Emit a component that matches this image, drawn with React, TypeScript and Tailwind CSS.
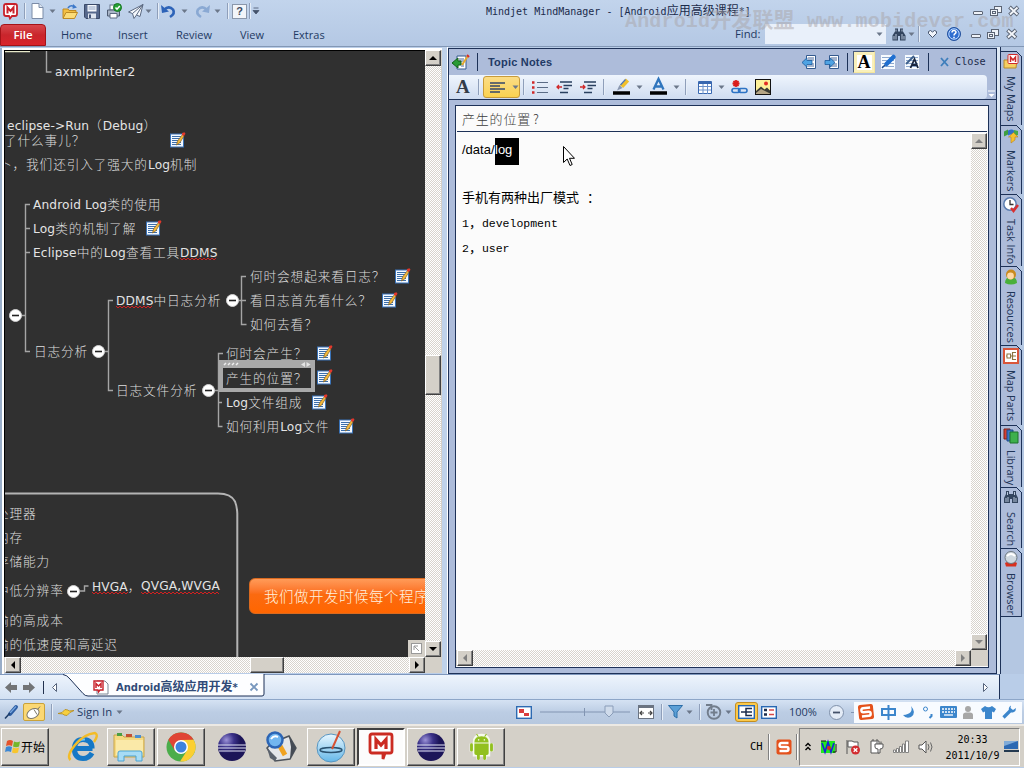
import React from "react";

const CJK = /([\u3000-\u9fff\uff00-\uffef]+)/;

function Mixed({ text, cjk }: { text: string; cjk: string }) {
  return (
    <>
      {text.split(CJK).map((part, i) =>
        CJK.test(part) ? (
          <span key={i} className={cjk}>{part}</span>
        ) : (
          <span key={i}>{part}</span>
        )
      )}
    </>
  );
}

function Ico({ w, h, className = "", children }: { w: number; h: number; className?: string; children: React.ReactNode }) {
  return (
    <svg width={w} height={h} viewBox={`0 0 ${w} ${h}`} fill="none" className={`block shrink-0 overflow-visible ${className}`}>
      {children}
    </svg>
  );
}

function Caret({ className = "" }: { className?: string }) {
  return (
    <Ico w={5} h={4} className={className}>
      <path d="M-.5 .5h6L2.500 4z" fill="#6b7789" />
    </Ico>
  );
}

function Sep({ className = "" }: { className?: string }) {
  return <div className={`h-4 w-px shrink-0 bg-[#8f9fba] shadow-[1px_0_0_#e6eef8] ${className}`} />;
}

function MinIcon({ className = "" }: { className?: string }) {
  return (
    <Ico w={12} h={11} className={className}>
      <rect x="1.500" y="5.500" width="9" height="3" rx=".5" fill="#eef2f8" stroke="#5b6474" />
    </Ico>
  );
}
function RestoreIcon({ className = "" }: { className?: string }) {
  return (
    <Ico w={12} h={11} className={className}>
      <rect x="4.500" y=".5" width="7" height="6" fill="#eef2f8" stroke="#5b6474" />
      <rect x=".5" y="3.500" width="7" height="6" fill="#eef2f8" stroke="#5b6474" />
      <rect x="2.500" y="5.500" width="3" height="2" stroke="#5b6474" />
    </Ico>
  );
}
function CloseIcon({ className = "" }: { className?: string }) {
  return (
    <Ico w={12} h={11} className={className}>
      <path d="M1.500 1l8.500 8M10 1L1.500 9" stroke="#5b6474" strokeWidth="3.800" />
      <path d="M2 1.500l7.500 7M9.500 1.500L2 8.500" stroke="#f3f6fb" strokeWidth="1.900" />
    </Ico>
  );
}
function Binoculars({ className = "" }: { className?: string }) {
  return (
    <Ico w={14} h={13} className={className}>
      <path d="M3 .5h3v3h2v-3h3v3l2.500 4V12.500H8V8H6v4.500H.5V7.500L3 3.500z" fill="#33455f" />
      <path d="M4 1.500v2M10 1.500v2M2 8v3.500M4 6v5.500M10 6v5.500M12 8v3.500" stroke="#b8c7dc" />
    </Ico>
  );
}
function HelpRound() {
  return (
    <Ico w={14} h={14}>
      <circle cx="7" cy="7" r="6.500" fill="#2f6ed0" stroke="#24519c" />
      <circle cx="7" cy="7" r="5.200" stroke="#bcd8ff" />
      <path d="M5 5.500C5 3 9 3 9 5.300 9 6.800 7 6.600 7 8.500M7 9.800v1.400" stroke="#fff" strokeWidth="1.500" />
    </Ico>
  );
}

function TitleBar() {
  return (
    <div className="flex h-[22px] shrink-0 items-center">
      <Ico w={15} h={16} className="ml-[3px]">
        <path d="M3 1h9q2 0 2 2v8q0 2-2 2H9l-2 2.500L6 13H3q-2 0-2-2V3q0-2 2-2z" fill="#fff" stroke="#c8202a" strokeWidth="1.800" />
        <path d="M4.500 10.500v-6l3 3.500 3-3.500v6" stroke="#c8202a" strokeWidth="2" />
      </Ico>
      <Sep className="ml-[6px]" />
      <Ico w={13} h={16} className="ml-[6px]">
        <path d="M1 .5h7l4 4v11H1z" fill="#fff" stroke="#7b8ba6" />
        <path d="M8 .5v4h4" fill="#dce5f2" stroke="#7b8ba6" />
      </Ico>
      <Caret className="ml-[6px]" />
      <Ico w={16} h={15} className="ml-[7px]">
        <path d="M1 14V5h5l1 1.500h7V9" fill="#f3bf42" stroke="#bd8a25" />
        <path d="M1 14.500L4 8.500h11.500L12.500 14.500z" fill="#fbdc78" stroke="#bd8a25" />
        <path d="M6 4q2-3.500 6-1.500" stroke="#3d78c9" strokeWidth="1.600" />
        <path d="M11 0l4 3.500-4.500 1.300z" fill="#3d78c9" />
      </Ico>
      <Ico w={16} h={15} className="ml-[6px]">
        <path d="M.5.5h15v14H2l-1.500-1.500z" fill="#56688c" stroke="#3b4a69" />
        <rect x="3.500" y="1" width="9" height="6.500" fill="#f5f8fc" />
        <path d="M4.500 3h7M4.500 5h7" stroke="#8fa2c4" />
        <rect x="4" y="9.500" width="8" height="5" fill="#dfe6f0" />
        <rect x="5" y="10.500" width="2" height="3.500" fill="#44557a" />
      </Ico>
      <Ico w={15} h={16} className="ml-[7px]">
        <rect x="3" y="2" width="6" height="5" fill="#fff" stroke="#66748a" />
        <path d="M.5 7h12v6H.5z" fill="#a9b5c7" stroke="#4d5a70" />
        <path d="M3 10.500h7v4.500H3z" fill="#fff" stroke="#5d6a80" />
        <circle cx="10.500" cy="4.500" r="4" fill="#25a233" stroke="#157320" />
        <path d="M8.500 4.500l1.500 1.700L12.800 3" stroke="#fff" strokeWidth="1.500" />
      </Ico>
      <Ico w={16} h={15} className="ml-[6px]">
        <path d="M15 .5L.5 8l4 1.500L6 14.500l2.500-3.500 3.500 1.500z" fill="#f6f9fd" stroke="#5c6a82" />
        <path d="M15 .5L4.500 9.500M15 .5L8.500 11" stroke="#5c6a82" />
      </Ico>
      <Caret className="ml-[2px]" />
      <Sep className="ml-[6px]" />
      <Ico w={15} h={13} className="ml-[3px]">
        <path d="M3 5q5-5 9-.5 2.500 4-3 7.500" stroke="#2d63b8" strokeWidth="2.600" />
        <path d="M0 0l1 8L8 6.500z" fill="#2d63b8" />
      </Ico>
      <Caret className="ml-[6px]" />
      <Ico w={15} h={13} className="ml-[8px]">
        <path d="M12 5Q7 0 3 4.500.5 8.500 6 12" stroke="#8aa9d3" strokeWidth="2.600" />
        <path d="M15 0l-1 8L7 6.500z" fill="#8aa9d3" />
      </Ico>
      <Caret className="ml-[5px]" />
      <Sep className="ml-[7px]" />
      <div className="ml-1 flex h-[15px] w-[15px] shrink-0 items-center justify-center border border-[#8a97ab] bg-[#f2f5fa] font-['Liberation_Sans'] text-[11px] font-bold text-[#3d4a60]">?</div>
      <Sep className="ml-[2px]" />
      <Ico w={6} h={8} className="ml-[3px]">
        <path d="M.5 1h5M0 3.500h6L3 7z" fill="#44526a" stroke="#44526a" strokeWidth=".8" />
      </Ico>
      <div className="ml-[227px] w-[267px] shrink-0 whitespace-pre font-['DejaVu_Sans_Mono','Noto_Sans_CJK_SC',monospace] text-[10px] text-[#1b2b4a]">
        <Mixed text="Mindjet MindManager - [Android应用高级课程*]" cjk="text-[12px]" />
      </div>
      <MinIcon className="ml-[219px]" />
      <RestoreIcon className="ml-[6px]" />
      <CloseIcon className="ml-[6px]" />
    </div>
  );
}

function Ribbon() {
  return (
    <div className="relative flex h-[24px] shrink-0 items-center font-['Open_Sans',sans-serif] text-[11px] text-[#1f3a63]">
      <div className="mt-[2px] flex h-[22px] w-[46px] shrink-0 items-center justify-center rounded-t-[4px] border border-[#a31318] bg-linear-to-b from-[#d8464d] via-[#c9252c] to-[#d8242b] text-[11.500px] font-semibold text-white">File</div>
      <div className="ml-[15px] w-[57px] shrink-0 pt-[3px]">Home</div>
      <div className="w-[58px] shrink-0 pt-[3px]">Insert</div>
      <div className="w-[64px] shrink-0 pt-[3px]">Review</div>
      <div className="w-[53px] shrink-0 pt-[3px]">View</div>
      <div className="w-[40px] shrink-0 pt-[3px]">Extras</div>
      <div className="ml-[402px] w-[30px] shrink-0 text-[11.300px]">Find:</div>
      <div className="flex h-[20px] w-[121px] shrink-0 items-center justify-end bg-[#e9f0fa] pr-[4px]">
        <Caret />
      </div>
      <Binoculars className="ml-[6px]" />
      <Caret className="ml-[3px]" />
      <Sep className="ml-[4px]" />
      <Ico w={9} h={8} className="ml-[9px]">
        <path d="M.5 1.500l2-1L4.500 2 6.500.5l2 1v2l-4 4-4-4z" fill="#f2f6fc" stroke="#44526a" />
      </Ico>
      <div className="ml-[10px]"><HelpRound /></div>
      <MinIcon className="ml-[9px]" />
      <RestoreIcon className="ml-[5px]" />
      <CloseIcon className="ml-[7px]" />
      <div className="absolute left-[625px] top-[-14px] whitespace-pre font-['Liberation_Mono','Noto_Sans_CJK_SC',monospace] text-[20px] leading-[28px] font-bold tracking-[0.16px] text-[#a9a5a8]/50">
        <Mixed text="Android开发联盟 www.mobidever.com" cjk="text-[21px]" />
      </div>
    </div>
  );
}

function NoteIcon() {
  return (
    <Ico w={15} h={16}>
      <rect x=".5" y="2" width="13" height="13" fill="#f4f9ff" stroke="#3a73b8" />
      <path d="M2 4.500h9M2 6.500h9M2 8.500h9M2 10.500h9M2 12.500h9" stroke="#3c6eaa" />
      <path d="M12.500 2.500L7.500 9l-1 4 3.200-2L14 4z" fill="#f3b73a" stroke="#80612a" strokeWidth=".7" />
      <path d="M12 1l2.500-.8 1 1.500L14 4l-2-1z" fill="#e2382c" />
    </Ico>
  );
}

function Collapse() {
  return (
    <Ico w={13} h={13}>
      <circle cx="6.500" cy="6.500" r="6" fill="#fff" stroke="#d0d0d0" />
      <path d="M3 6.500h7" stroke="#222" strokeWidth="1.600" />
    </Ico>
  );
}

type Topic = { x: number; y: number; text: string };
const topics: Topic[] = [
  { x: 55, y: 72, text: "axmlprinter2" },
  { x: 7, y: 125, text: "eclipse->Run（Debug）" },
  { x: 4, y: 140, text: "了什么事儿？" },
  { x: -1, y: 164, text: "卜，我们还引入了强大的Log机制" },
  { x: 33, y: 204, text: "Android Log类的使用" },
  { x: 33, y: 228, text: "Log类的机制了解" },
  { x: 33, y: 252, text: "Eclipse中的Log查看工具DDMS" },
  { x: 250, y: 276, text: "何时会想起来看日志？" },
  { x: 250, y: 300, text: "看日志首先看什么？" },
  { x: 250, y: 324, text: "如何去看？" },
  { x: 116, y: 300, text: "DDMS中日志分析" },
  { x: 34, y: 351, text: "日志分析" },
  { x: 226, y: 353, text: "何时会产生？" },
  { x: 116, y: 390, text: "日志文件分析" },
  { x: 226, y: 402, text: "Log文件组成" },
  { x: 226, y: 426, text: "如何利用Log文件" },
  { x: -4, y: 513, text: "处理器" },
  { x: -4, y: 537, text: "内存" },
  { x: -4, y: 561, text: "存储能力" },
  { x: -4, y: 590, text: "中低分辨率" },
  { x: 92, y: 586, text: "HVGA，" },
  { x: 141, y: 586, text: "QVGA,WVGA" },
  { x: -4, y: 620, text: "输的高成本" },
  { x: -4, y: 644, text: "输的低速度和高延迟" },
];
const notes = [[170, 132], [146, 220], [395, 268], [382, 292], [317, 345], [317, 369], [312, 394], [339, 418]];
const collapses = [[9, 309], [92, 345], [226, 294], [202, 384], [67, 585]];
const squiggles = [[180, 258, 217], [116, 306, 153], [92, 592, 128], [141, 592, 220]];

function wave(x1: number, y: number, x2: number) {
  let d = `M${x1} ${y}`;
  for (let x = x1 + 2, k = 0; x <= x2; x += 2, k++) d += `L${x} ${k % 2 ? y : y + 2}`;
  return d;
}

function MapCanvas() {
  return (
    <div className="relative h-[607px] w-[421px] shrink-0 overflow-hidden border-l border-t border-black bg-[#303030]">
      <svg className="absolute -left-px -top-px" width="421" height="607" viewBox="4 50 421 607" fill="none">
        <path d="M5 51.500h25" stroke="#e6e8c8" strokeWidth="1.500" />
        <path d="M46.500 51v21h5M30 204.500h-4.500v147H30M25 228.500h5M25 252.500h5M20 315.500h5M113 300.500h-4.500v90H113M104 351.500h4M246 276.500h-4.500v48h5M238 300.500h8M223 353.500h-4.500v73h4M214 390.500h4M218 402.500h4M80 591h4.500v-5h4" stroke="#a5a5a5" strokeWidth="1.400" />
        <path d="M4 493.500h214q13 0 17 8 2 5 2.300 12V660" stroke="#b4b4b4" strokeWidth="2" />
        {squiggles.map(([a, b, c]) => (
          <path key={`${a}-${b}`} d={wave(a, b, c)} stroke="#d32020" strokeWidth="1" />
        ))}
      </svg>
      <div className="absolute left-[244px] top-[527px] flex h-[36px] w-[200px] items-center rounded-[6px] border border-[#d96a20] bg-linear-to-b from-[#ff9b58] via-[#fb6a10] via-45% to-[#ff6600] pl-[14px] font-['Noto_Sans_CJK_SC',sans-serif] text-[14.500px] font-light tracking-[0.5px] whitespace-nowrap text-[#fff1df]">
        我们做开发时候每个程序
      </div>
      {topics.map((t) => (
        <div
          key={`${t.x}-${t.y}`}
          className="absolute whitespace-pre font-['DejaVu_Sans','Noto_Sans_CJK_SC',sans-serif] text-[12.200px] leading-[20px] tracking-[0.13px] text-[#e4e4e4]"
          style={{ left: t.x - 5, top: t.y - 61 }}
        >
          <Mixed text={t.text} cjk="font-['Noto_Sans_CJK_SC'] text-[12.700px] font-light tracking-[0.85px] text-[#dedede]" />
        </div>
      ))}
      <div className="absolute left-[214px] top-[309px] flex h-[32px] w-[96px] flex-col border-x-[4px] border-b-[4px] border-[#a9a9a9]">
        <div className="flex h-[8px] shrink-0 items-center justify-between bg-[#a9a9a9] px-px">
          <Ico w={16} h={4}><path d="M0 3l2-2M4 3l2-2M8 3l2-2M12 3l2-2" stroke="#eee" strokeWidth="1.500" /></Ico>
          <Ico w={9} h={5}><path d="M4 0v5L0 2.500zM5.500 0v5l4-2.500z" fill="#e4e4e4" /></Ico>
        </div>
        <div className="flex grow items-center bg-[#303030] pl-[3px] font-['Noto_Sans_CJK_SC'] text-[12.700px] leading-[16px] font-light tracking-[0.85px] whitespace-nowrap text-[#dedede]">产生的位置？</div>
      </div>
      {notes.map(([x, y]) => (
        <div key={`${x}-${y}`} className="absolute" style={{ left: x - 5, top: y - 51 }}><NoteIcon /></div>
      ))}
      {collapses.map(([x, y]) => (
        <div key={`${x}-${y}`} className="absolute" style={{ left: x - 5, top: y - 51 }}><Collapse /></div>
      ))}
      <div className="absolute bottom-0 right-0 flex h-[17px] w-[17px] items-center justify-center bg-[#d4d0c8]">
        <Ico w={11} h={11}>
          <rect x=".5" y=".5" width="10" height="10" fill="#fff" stroke="#999" />
          <path d="M3 7V3h4M3 3l5 5" stroke="#999" />
        </Ico>
      </div>
    </div>
  );
}

function ScrollBtn({ dir, dim }: { dir: "u" | "d" | "l" | "r"; dim?: boolean }) {
  const d = { u: "M4 0l4 4H0z", d: "M0 0h8L4 4z", l: "M4 0v8L0 4z", r: "M0 0l4 4-4 4z" }[dir];
  const v = dir === "u" || dir === "d";
  return (
    <div className="flex h-4 w-4 shrink-0 items-center justify-center border border-t-white border-l-white border-r-[#404040] border-b-[#404040] bg-[#d4d0c8] shadow-[inset_-1px_-1px_0_#808080]">
      <Ico w={v ? 8 : 4} h={v ? 4 : 8}><path d={d} fill={dim ? "#808080" : "#000"} /></Ico>
    </div>
  );
}

const TRACK = "bg-[#f0eeea] bg-[repeating-conic-gradient(#fff_0_25%,#d8d4cd_0_50%)] bg-[length:2px_2px]";
const THUMB = "shrink-0 border border-t-white border-l-white border-r-[#404040] border-b-[#404040] bg-[#d4d0c8] shadow-[inset_-1px_-1px_0_#808080]";

function MapPane() {
  return (
    <div className="flex w-[438px] shrink-0 flex-col border-t-2 border-white bg-[#d4d0c8]">
      <div className="flex h-[607px] shrink-0">
        <MapCanvas />
        <div className={`flex w-4 shrink-0 flex-col ${TRACK}`}>
          <ScrollBtn dir="u" />
          <div className={`mt-[289px] h-[40px] ${THUMB}`} />
          <div className="grow" />
          <ScrollBtn dir="d" />
        </div>
      </div>
      <div className="flex h-4 shrink-0">
        <div className={`ml-px flex w-[420px] ${TRACK}`}>
          <ScrollBtn dir="l" />
          <div className={`ml-[229px] w-[34px] ${THUMB}`} />
          <div className="grow" />
          <ScrollBtn dir="r" />
        </div>
      </div>
    </div>
  );
}

function LinesIcon({ kind, className = "" }: { kind: "bul" | "out" | "in"; className?: string }) {
  return (
    <Ico w={17} h={13} className={className}>
      {kind === "bul" ? (
        <>
          <path d="M5 1.500h11M5 6.500h11M5 11.500h11" stroke="#5b6c86" />
          <path d="M0 1.500h2.500M0 6.500h2.500M0 11.500h2.500" stroke="#d02828" strokeWidth="2.500" />
        </>
      ) : (
        <>
          <path d="M4 1h12M7.500 4.500h8.500M7.500 7.500h5M4 11.500h8" stroke="#2a405f" strokeWidth="1.600" />
          <path d={kind === "out" ? "M6 6H1M3 4L1 6l2 2" : "M0 6h5M3 4l2 2-2 2"} stroke="#d02828" strokeWidth="1.300" />
        </>
      )}
    </Ico>
  );
}

function SheetArrow({ flip, className = "" }: { flip?: boolean; className?: string }) {
  return (
    <Ico w={15} h={15} className={className}>
      <path d="M4.500.5h9v13h-9z" fill="#fff" stroke="#345a8e" />
      <path d="M6 3h6M6 5h6M8 9h4M6 11h6" stroke="#49699b" />
      <path d={flip ? "M10 7.500L5 2.800V5.500H0v4h5v2.700z" : "M0 7.500l5-4.700V5.500h5v4H5v2.700z"} fill="#4fa3e3" stroke="#1c5b9d" strokeWidth=".8" />
    </Ico>
  );
}

function SheetPen({ letter, className = "" }: { letter?: boolean; className?: string }) {
  return (
    <Ico w={14} h={14} className={className}>
      <path d="M0 0h14v14H0z" fill="#f7fbff" />
      <path d="M1 2.500h12M1 5.500h12M1 8.500h12M1 11.500h12" stroke="#8ea9cf" />
      {letter ? (
        <>
          <path d="M9 1L1 9" stroke="#3d5f8c" strokeWidth="2" />
          <path d="M5.500 13L9.500 4l3.500 9M7 10h5" stroke="#1a2740" strokeWidth="1.800" />
        </>
      ) : (
        <>
          <path d="M12.500 2L5.500 9" stroke="#1f6fd0" strokeWidth="4.500" strokeLinecap="round" />
          <path d="M4 10l-3 3" stroke="#1f4f90" strokeWidth="1.500" />
        </>
      )}
    </Ico>
  );
}

function NotesPane() {
  return (
    <div className="mt-px flex w-[549px] shrink-0 flex-col border border-[#1d3157] bg-[#adbcda]">
      <div className="flex h-[26px] shrink-0 items-center">
        <Ico w={17} h={15} className="ml-[3px]">
          <path d="M5 1h9v13H5z" fill="#fff" stroke="#345a8e" />
          <path d="M7 4h5M7 6h5M9 9h3M9 11h3" stroke="#49699b" />
          <path d="M0 8l6-5v3h3v4H6v3z" fill="#2a9b35" stroke="#126019" />
          <path d="M15.500 1.500L10 10" stroke="#e3a92f" strokeWidth="2" />
          <path d="M15 0l2 2" stroke="#d92a22" strokeWidth="2" />
        </Ico>
        <div className="ml-[8px] h-[18px] w-px shrink-0 bg-[#1d3157]" />
        <div className="ml-[10px] w-[314px] shrink-0 font-['Liberation_Sans',sans-serif] text-[11px] font-bold tracking-[0.2px] text-[#223a66]">Topic Notes</div>
        <SheetArrow />
        <SheetArrow flip className="ml-[8px]" />
        <div className="ml-[7px] h-[18px] w-px shrink-0 bg-[#1d3157]" />
        <div className="ml-[5px] flex h-[22px] w-[22px] shrink-0 items-center justify-center border border-[#4b5c7c] border-r-[#f5e69c] border-b-[#f5e69c] bg-[#f9f0ba]">
          <div className="h-[15px] w-[15px] bg-white text-center font-['Liberation_Serif',serif] text-[18px] leading-[15px] font-bold text-black">A</div>
        </div>
        <SheetPen className="ml-[6px]" />
        <SheetPen letter className="ml-[10px]" />
        <div className="ml-[9px] h-[18px] w-px shrink-0 bg-[#1d3157]" />
        <Ico w={9} h={8} className="ml-[11px]"><path d="M1 0l7 8M8 0L1 8" stroke="#3e7ebb" strokeWidth="1.800" /></Ico>
        <div className="ml-[6px] shrink-0 font-['DejaVu_Sans_Mono',monospace] text-[10.200px] text-[#1b2b4a]">Close</div>
      </div>
      <div className="flex h-[25px] shrink-0 border-b border-[#1d3157]">
        <div className="flex w-[538px] shrink-0 items-center rounded-r-[4px] bg-linear-to-b from-[#eff5fd] to-[#cfdcf0]">
          <div className="ml-[7px] w-[15px] shrink-0 font-['Liberation_Serif',serif] text-[19px] leading-[20px] font-bold text-[#333c48]">A</div>
          <Sep className="ml-[7px]" />
          <div className="ml-[4px] flex h-[22px] w-[37px] shrink-0 items-center rounded-[3px] border border-[#c89b3a] bg-linear-to-b from-[#fbdc85] to-[#fbd24e] pl-[6px]">
            <Ico w={15} h={11}><path d="M0 1h15M0 4h10M0 7h15M0 10h10" stroke="#34476a" strokeWidth="1.500" /></Ico>
            <Caret className="ml-[8px]" />
          </div>
          <Sep className="ml-[3px]" />
          <LinesIcon kind="bul" className="ml-[8px]" />
          <LinesIcon kind="out" className="ml-[7px]" />
          <LinesIcon kind="in" className="ml-[7px]" />
          <Sep className="ml-[6px]" />
          <Ico w={18} h={16} className="ml-[9px]">
            <path d="M0 14h17" stroke="#000" strokeWidth="3.500" />
            <path d="M14.500 1L8.500 7.500" stroke="#f1c02b" strokeWidth="4.500" />
            <path d="M12.500 .5L7.500 6" stroke="#4a76c0" strokeWidth="1.200" />
            <path d="M6.500 6l-2.500 5.500 5.500-2.500z" fill="#8a98b0" />
          </Ico>
          <Caret className="ml-[6px]" />
          <Ico w={18} h={16} className="ml-[8px]">
            <path d="M0 14h17" stroke="#000" strokeWidth="3.500" />
            <path d="M3.500 10.500L8.500 0 13.500 10.500M5 7.500h7" stroke="#2f75bd" strokeWidth="2.300" />
          </Ico>
          <Caret className="ml-[6px]" />
          <Sep className="ml-[6px]" />
          <Ico w={14} h={13} className="ml-[12px]">
            <path d="M.5.5h13v12H.5z" fill="#fff" stroke="#3968b0" />
            <path d="M0 2h14" stroke="#3968b0" strokeWidth="2" />
            <path d="M1 5.500h12M1 9h12M5 3v10M9.500 3v10" stroke="#6d92cb" />
          </Ico>
          <Caret className="ml-[7px]" />
          <Ico w={17} h={14} className="ml-[7px]">
            <path d="M5 0v7M1.500 3.500h7M2.500 1l5 5M7.500 1l-5 5" stroke="#d91d1d" strokeWidth="1.800" />
            <rect x="1" y="8.500" width="8" height="4" rx="2" stroke="#2d73c4" strokeWidth="1.600" />
            <rect x="7.500" y="8.500" width="8.500" height="4" rx="2" stroke="#2d73c4" strokeWidth="1.600" />
          </Ico>
          <Ico w={16} h={16} className="ml-[7px]">
            <rect x=".5" y=".5" width="15" height="15" fill="#fdf19a" stroke="#111" />
            <circle cx="11" cy="4.500" r="2" fill="#e22c24" />
            <path d="M1 12l5-4.500 3.500 3 2.500-2 3 3V15H1z" fill="#3b3c35" />
            <path d="M1 14l5-4 9 4.500V15H1z" fill="#b5a585" />
          </Ico>
        </div>
        <Ico w={7} h={8} className="ml-px mt-[15px]"><path d="M0 1h7" stroke="#fff" /><path d="M.5 4h6l-3 3z" fill="#fff" /></Ico>
      </div>
      <div className="mt-[5px] ml-[6px] flex h-[563px] w-[534px] shrink-0 flex-col border border-[#1d3157] bg-[#fbfbfb]">
        <div className="mx-px flex h-[26px] shrink-0 items-center border-b border-[#1d3157] pl-[5px] font-['Noto_Sans_CJK_SC'] text-[13px] font-light tracking-[0.8px] text-[#3c3c3c]">产生的位置<span className="ml-[2px]">?</span></div>
        <div className="mt-px flex h-[517px] shrink-0">
          <div className="flex w-[515px] shrink-0 flex-col pl-[6px] text-black">
            <div className="mt-[5px] flex h-[27px] shrink-0 items-start font-['Liberation_Sans',sans-serif] text-[13px] leading-[24px]">
              <span className="w-[33px] shrink-0">/data/</span>
              <span className="h-[27px] w-[24px] bg-black text-white">log</span>
            </div>
            <div className="mt-[20px] flex h-[24px] shrink-0 items-center whitespace-pre font-['Noto_Sans_CJK_SC'] text-[13px]">手机有两种出厂模式<span className="ml-[8px]">：</span></div>
            <div className="mt-[3px] flex h-[24px] shrink-0 items-center font-['Liberation_Mono','Noto_Sans_CJK_SC',monospace] text-[11.500px]">1<span className="w-[13px] text-[13px]">，</span>development</div>
            <div className="mt-[1px] flex h-[24px] shrink-0 items-center font-['Liberation_Mono','Noto_Sans_CJK_SC',monospace] text-[11.500px]">2<span className="w-[13px] text-[13px]">，</span>user</div>
          </div>
          <div className={`flex w-4 shrink-0 flex-col justify-between ${TRACK}`}>
            <ScrollBtn dir="u" dim />
            <ScrollBtn dir="d" dim />
          </div>
        </div>
        <div className="flex h-4 shrink-0 bg-[#d4d0c8]">
          <div className={`ml-px flex w-[514px] justify-between ${TRACK}`}>
            <ScrollBtn dir="l" dim />
            <ScrollBtn dir="r" dim />
          </div>
        </div>
      </div>
    </div>
  );
}

const sideIcons: Record<string, React.ReactNode> = {
  "My Maps": (
    <><path d="M1 14V6h4l1-2h8l-1 10z" fill="#f5cf62" stroke="#b98b2a" /><rect x="5" y=".5" width="10" height="9" rx="1" fill="#fff" stroke="#cf2a2a" /><path d="M7.500 8V3l2.500 3 2.500-3v5" stroke="#cf2a2a" strokeWidth="1.500" /></>
  ),
  Markers: (
    <><path d="M1 3.500l4-2v5l-4 2z" fill="#3e9e3e" /><path d="M5 2.500q4-2 6 0v5q-3-2-6 0z" fill="#2f70c8" /><path d="M11 2l4 1v4l-4 1z" fill="#48a848" /><path d="M8 15V9H5.500l5-4.500 4.500 4.500h-3v3z" fill="#f5c02f" stroke="#b9811a" strokeWidth=".6" /></>
  ),
  "Task Info": (
    <><circle cx="7" cy="7" r="6.200" fill="#fff" stroke="#5b7db0" strokeWidth="1.500" /><path d="M7 3v4.500h3.500" stroke="#333" strokeWidth="1.300" /><path d="M8 11l2.500 3L15 8" stroke="#d93030" strokeWidth="2.400" /></>
  ),
  Resources: (
    <><path d="M2 14q0-6 6-6t6 6q-6 3-12 0z" fill="#49b03a" /><circle cx="8" cy="5.500" r="5" fill="#c98a1e" /><circle cx="7.500" cy="7" r="3.400" fill="#ffd9a5" /></>
  ),
  "Map Parts": (
    <><rect x="1" y="1" width="14" height="14" fill="#fff" stroke="#d9553a" strokeWidth="2" /><path d="M3 8h9M9.500 4.500v7M9 4.500h4M9 8h4M9 11.500h4" stroke="#8b7440" strokeWidth="1.200" /><rect x="4" y="6" width="3.500" height="4" fill="#fff" stroke="#8b7440" /></>
  ),
  Library: (
    <><path d="M1 1h6v10H1z" fill="#d64030" stroke="#7c2018" /><path d="M4 2h6v11H4z" fill="#3a76c8" stroke="#1f4a88" /><path d="M7 4h8v11H7z" fill="#3db04c" stroke="#1d702a" /></>
  ),
  Search: (
    <><path d="M3 1h3v3h4V1h3v3l2 4v5H9V9H7v4H1V8l2-4z" fill="#33455f" /><path d="M4.500 2v3M11.500 2v3M3 8v4M5 7v5M11 7v5M13 8v4" stroke="#b8c7dc" /></>
  ),
  Browser: (
    <><path d="M2 12q6-4 12 0l-1 3.500H3z" fill="#d8301f" /><circle cx="8" cy="6.500" r="6" fill="#cfd8df" stroke="#6d7780" /><path d="M4 5q4-4 8 0" stroke="#fff" strokeWidth="2" /></>
  ),
};

const sideTabs = [
  { label: "My Maps", box: "h-[74px]" },
  { label: "Markers", box: "h-[69px]" },
  { label: "Task Info", box: "h-[72px]" },
  { label: "Resources", box: "h-[79px]" },
  { label: "Map Parts", box: "h-[80px]" },
  { label: "Library", box: "h-[62px]" },
  { label: "Search", box: "h-[61px]" },
  { label: "Browser", box: "h-[68px]" },
];

function SideTabs() {
  return (
    <div className="flex w-[24px] shrink-0 flex-col border-l border-[#1d3157] bg-[#b4c7e2] pt-[4px]">
      {sideTabs.map((t) => (
        <div key={t.label} className={`relative flex w-[21px] shrink-0 flex-col items-center border-t border-r border-[#1d3157] bg-[#adbcda] pt-[2px] ${t.box}`}>
          <Ico w={16} h={16}>{sideIcons[t.label]}</Ico>
          <div className="mt-[6px] whitespace-nowrap font-['Open_Sans',sans-serif] text-[10.800px] leading-[16px] text-[#1f3558] [writing-mode:vertical-rl]">{t.label}</div>
          <svg className="absolute -top-px -right-px" width="6" height="6" viewBox="0 0 6 6">
            <path d="M0 0h6v6z" fill="#b4c7e2" /><path d="M0 0l6 6" stroke="#1d3157" />
          </svg>
        </div>
      ))}
      <div className="w-[21px] border-t border-[#1d3157]" />
    </div>
  );
}

function DocTabs() {
  return (
    <div className="flex h-[25px] w-[1000px] shrink-0 items-center border-t border-[#7f98bd] border-r border-r-[#1d3157] bg-linear-to-b from-[#edf4fc] to-[#d3e1f3]">
      <Ico w={13} h={11} className="mt-px ml-[5px]"><path d="M0 5.500L6 0v3h6v5H6v3z" fill="#727476" /></Ico>
      <Ico w={13} h={11} className="mt-px ml-[5px]"><path d="M12 5.500L6 0v3H0v5h6v3z" fill="#727476" /></Ico>
      <div className="mt-px ml-[7px] h-[13px] w-px shrink-0 bg-[#22314e]" />
      <Ico w={5} h={9} className="mt-px ml-[8px]"><path d="M4.500.5v8l-4-4z" fill="#fff" stroke="#56647c" /></Ico>
      <div className="relative ml-[6px] flex h-full w-[204px] shrink-0 items-center">
        <svg className="absolute left-0 -top-px" width="204" height="24" viewBox="0 0 204 24" fill="none">
          <path d="M0 0q4 1 7 5l13 14.500q2 2.500 5 2.500h174q2 0 2-2V0z" fill="#fdfeff" />
          <path d="M0 .5q4 .5 7 4.500l13 14.500q2 2.500 5 2.500h174q2 0 2-2V0" stroke="#1d3157" />
        </svg>
        <Ico w={16} h={15} className="relative ml-[30px]">
          <path d="M4 1h8l3 3v10H4z" fill="#fff" stroke="#7d8795" />
          <path d="M1 1h9v9H7l-1.500 2L5 10H1z" fill="#fff" stroke="#c8202a" strokeWidth="1.400" />
          <path d="M3 8V3.500L5.500 6 8 3.500V8" stroke="#c8202a" strokeWidth="1.500" />
        </Ico>
        <div className="relative ml-[7px] w-[134px] shrink-0 whitespace-nowrap font-['DejaVu_Sans','Noto_Sans_CJK_SC',sans-serif] text-[10px] font-bold text-[#304b78]"><Mixed text="Android高级应用开发*" cjk="text-[12px]" /></div>
        <Ico w={8} h={8} className="relative"><path d="M.5.5l7 7M7.500.5l-7 7" stroke="#7797bd" strokeWidth="1.800" /></Ico>
      </div>
      <div className="grow" />
      <Ico w={5} h={9} className="mt-px mr-[11px]"><path d="M.5.5v8l4-4z" fill="#fff" stroke="#56647c" /></Ico>
    </div>
  );
}

function SogouS({ className = "" }: { className?: string }) {
  return (
    <Ico w={16} h={16} className={className}>
      <rect x=".5" y=".5" width="15" height="15" rx="2" fill="#e4511b" />
      <path d="M12.500 4H5.500q-2 0-2 2t2 2h5q2 0 2 2t-2 2h-7" stroke="#fff" strokeWidth="2.400" />
    </Ico>
  );
}

function StatusBar() {
  return (
    <div className="flex h-[25px] shrink-0 items-center border-t border-[#8da6c8] bg-linear-to-b from-[#d5e2f3] via-[#bccde4] to-[#b7c8df] font-['Open_Sans',sans-serif] text-[11.300px] text-[#1f3a63]">
      <Ico w={14} h={14} className="ml-[4px]">
        <path d="M12 2L6 9" stroke="#2c5da3" strokeWidth="4" strokeLinecap="round" /><path d="M12 1.500L6 8" stroke="#77a6df" strokeWidth="1.200" /><path d="M6 8l-5 5.500" stroke="#1e3d68" strokeWidth="1.600" />
      </Ico>
      <div className="ml-[5px] flex h-[18px] w-[22px] shrink-0 items-center justify-center rounded-[2px] border border-[#c9a23b] bg-[#fbd874]">
        <Ico w={16} h={13}><ellipse cx="7" cy="7.500" rx="6.500" ry="4.500" transform="rotate(-30 7 7.500)" fill="#fff" stroke="#7d7868" /><path d="M8 3.500l3 5M12 3l2-2.500" stroke="#7d7868" /></Ico>
      </div>
      <Sep className="ml-[6px]" />
      <Ico w={16} h={8} className="ml-[6px]"><path d="M0 5.500l4-1 3-3 3 .5 1 1 5-.5-4 2-3 3-3-.5-1-1z" fill="#f7cf3e" stroke="#b48a1c" strokeWidth=".8" /></Ico>
      <div className="ml-[3px] w-[40px] shrink-0 whitespace-nowrap">Sign In</div>
      <Caret />
      <Ico w={16} h={13} className="ml-[394px]">
        <rect x=".7" y=".7" width="14.600" height="11.600" fill="#fff" stroke="#2d6ab2" strokeWidth="1.400" />
        <path d="M3 3h5v4H3zM8 7h5v3H8z" fill="#d93d3d" />
      </Ico>
      <Ico w={90} h={16} className="ml-[8px]">
        <path d="M0 8h90M44.500 4v8" stroke="#8295b2" />
        <path d="M65 2h8v7l-4 4-4-4z" fill="#cfdbeb" stroke="#8a9db9" />
      </Ico>
      <Ico w={16} h={14} className="ml-[8px]">
        <rect x=".5" y=".5" width="15" height="13" fill="#fff" stroke="#6b7482" /><path d="M0 2h16" stroke="#6b7482" strokeWidth="2" /><path d="M2 8h4M10 8h4M4 6L2 8l2 2M12 6l2 2-2 2" stroke="#444" strokeWidth="1.200" />
      </Ico>
      <Sep className="ml-[7px]" />
      <Ico w={15} h={14} className="ml-[6px]"><path d="M.5.5h14L9 7v6l-3-2V7z" fill="#5b9fd6" stroke="#2d6ea8" /></Ico>
      <Caret className="ml-[4px]" />
      <Sep className="ml-[7px]" />
      <Ico w={16} h={16} className="ml-[6px]">
        <circle cx="8" cy="8.500" r="6.300" stroke="#727d8c" strokeWidth="1.900" /><path d="M0 1h5.500v5" stroke="#727d8c" strokeWidth="1.800" /><path d="M8 5v7M4.500 8.500h7" stroke="#727d8c" strokeWidth="1.800" />
      </Ico>
      <Caret className="ml-[4px]" />
      <div className="ml-[4px] flex h-[20px] w-[23px] shrink-0 items-center justify-center rounded-[3px] border border-[#c28d20] bg-[#fbc94b]">
        <Ico w={17} h={14}><rect x=".7" y=".7" width="15.600" height="12.600" fill="#fff" stroke="#2767b3" strokeWidth="1.400" /><path d="M3 7h5M14 3.500H8v7h6M8 7h6" stroke="#1b2c4c" strokeWidth="1.500" /></Ico>
      </div>
      <Ico w={16} h={13} className="ml-[3px]"><rect x=".7" y=".7" width="14.600" height="11.600" fill="#fff" stroke="#2767b3" strokeWidth="1.400" /><path d="M3 4h3M3 8.500h3" stroke="#1b2c4c" strokeWidth="2.500" /><path d="M8 4h5M8 8.500h5" stroke="#d54848" strokeWidth="1.300" /></Ico>
      <div className="ml-[12px] w-[40px] shrink-0 text-[11px]">100%</div>
      <Ico w={15} h={15}><circle cx="7.500" cy="7.500" r="7" fill="#e4ecf7" stroke="#7f90aa" /><path d="M4 7.500h7" stroke="#44526a" strokeWidth="1.800" /></Ico>
      <div className="ml-[7px] h-px w-[3px] shrink-0 bg-[#8295b2]" />
      <div className="flex h-[21px] w-[168px] shrink-0 items-center bg-[#f8fbff] text-[#418bd0]">
        <SogouS className="ml-[4px] -rotate-6" />
        <Ico w={15} h={15} className="ml-[7px]"><path d="M1 4h13v6H1zM7.500 0v15" stroke="#3c86cc" strokeWidth="2" /></Ico>
        <Ico w={13} h={13} className="ml-[6px]"><path d="M9 0q3 8-8 9 3 4 8 2 6-4 0-11z" fill="#3c86cc" /></Ico>
        <Ico w={11} h={12} className="ml-[8px]"><circle cx="2.500" cy="3" r="2" stroke="#3c86cc" /><path d="M8.500 8v2l-2 2" stroke="#3c86cc" strokeWidth="2" /></Ico>
        <Ico w={17} h={12} className="ml-[6px]"><rect width="17" height="12" rx="1" fill="#3c86cc" /><path d="M2 3h13M2 6h13" stroke="#fff" strokeWidth="1.300" strokeDasharray="2 1" /><path d="M4 9h9" stroke="#fff" strokeWidth="1.300" /></Ico>
        <Ico w={10} h={13} className="ml-[6px]"><circle cx="5" cy="3" r="3" fill="#a7a7a7" /><path d="M0 13V9q0-2.500 3-2.500h4q3 0 3 2.500v4z" fill="#a7a7a7" /></Ico>
        <Ico w={15} h={13} className="ml-[8px]"><path d="M4 0q3.500 2.500 7 0l4 3-2 3.500-2-1V13H4V5.500l-2 1L0 3z" fill="#3c86cc" /></Ico>
        <Ico w={14} h={14} className="ml-[6px]"><path d="M1.500 12.500L9 5" stroke="#3c86cc" strokeWidth="3.200" /><path d="M9 .5Q6 2.500 7 5.500t5 1.500q2-1 2-4l-3 2-2.500-2z" fill="#3c86cc" /></Ico>
      </div>
    </div>
  );
}

const BTN = "flex h-[38px] w-[48px] shrink-0 items-center justify-center border border-t-white border-l-white border-r-[#404040] border-b-[#404040] bg-[#d4d0c8] shadow-[inset_-1px_-1px_0_#808080]";

function Sphere() {
  return (
    <Ico w={30} h={30}>
      <defs><radialGradient id="sph" cx=".3" cy=".25"><stop stopColor="#9c93d8" /><stop offset=".55" stopColor="#3a3188" /><stop offset="1" stopColor="#1c1558" /></radialGradient></defs>
      <circle cx="15" cy="15" r="14" fill="url(#sph)" />
      <path d="M1 13h28M1 16h28M2 19h26" stroke="#e6e8f8" strokeWidth="1.100" />
    </Ico>
  );
}

function Taskbar() {
  return (
    <div className="flex h-[43px] shrink-0 items-center border-t-2 border-[#ece9e4] bg-[#d4d0c8]">
      <div className={`ml-[1px] ${BTN}`}>
        <Ico w={15} h={15}>
          <path d="M2 2q3-2 6 0L7 7Q4 5.500 1 7z" fill="#e5532a" /><path d="M9 2.500q3 1.500 6 0l-1 5q-3 1.500-6 0z" fill="#74b72b" /><path d="M1 8q3-1.500 6 0l-1 5q-3-1.500-6 0z" fill="#3b87d3" /><path d="M8 8.500q3 1.500 6 0l-1 5q-3 1.500-6 0z" fill="#f7c52d" />
        </Ico>
        <span className="ml-px whitespace-nowrap font-['Noto_Sans_CJK_SC'] text-[12px] text-black">开始</span>
      </div>
      <Ico w={31} h={30} className="ml-[18px]">
        <path d="M25.500 16.500H9.500M25 21q-3 5.500-9 5.500-8.500 0-8.500-9.500t8.500-9.500q9 0 9 9" stroke="#1578c6" strokeWidth="5.200" />
        <path d="M9 12q3-5 9-4.500" stroke="#70c6f7" strokeWidth="2" />
        <path d="M3.500 28Q-1 24 8 13T28 1q4 2-1 9" stroke="#f3bc27" strokeWidth="2.400" />
      </Ico>
      <div className={`ml-[9px] ${BTN} shadow-[inset_-1px_-1px_0_#808080,inset_-4px_0_0_#d4d0c8,inset_-5px_0_0_#404040]`}>
        <Ico w={33} h={30} className="-ml-[3px]">
          <path d="M1 3h8l2 2h20v20H1z" fill="#f5d982" stroke="#c9a547" />
          <path d="M3 8h27v15H3z" fill="#fae9a8" /><path d="M4 1h5v3H4z" fill="#4a9e42" /><path d="M13 2h6v3h-6z" fill="#c45132" /><path d="M22 3h6v3h-6z" fill="#4b8ecf" />
          <path d="M5 29V21q0-2 2-2h20q2 0 2 2v8h-6v-5H11v5z" fill="#a7dcf5" stroke="#4ba3d3" />
        </Ico>
      </div>
      <div className={`ml-[2px] ${BTN}`}>
        <Ico w={30} h={30}>
          <circle cx="15" cy="15" r="14.500" fill="#4bad4a" />
          <path d="M2.400 7.800A14.500 14.500 0 0 1 27.600 7.800L15 8.500 8.800 18.500z" fill="#e04434" />
          <path d="M27.600 7.800A14.500 14.500 0 0 1 14 29.500L21 18.500 15 8z" fill="#fbcf32" />
          <circle cx="15" cy="15" r="7" fill="#fff" /><circle cx="15" cy="15" r="5.500" fill="#3e82dd" />
        </Ico>
      </div>
      <div className="ml-[12px]"><Sphere /></div>
      <Ico w={32} h={31} className="ml-[18px]">
        <path d="M2 17l5-5 17-7 7 12-6 11-15 2z" fill="#e4e6e9" stroke="#4d535b" strokeWidth="1.500" /><path d="M24 5l7 12-6 11 1-12z" fill="#454b54" /><path d="M2 17l3 10 5 3 2-3" fill="#5b626c" />
        <path d="M15 15l5 9" stroke="#f0a322" strokeWidth="5" /><circle cx="10" cy="9" r="7.500" fill="#72b6ef" stroke="#2c65b5" strokeWidth="2.500" /><path d="M6 8q3-4 7-2" stroke="#fff" strokeWidth="2" />
      </Ico>
      <div className={`ml-[10px] ${BTN}`}>
        <Ico w={32} h={32}>
          <defs><linearGradient id="bowl" x1="0" y1="0" x2="0" y2="1"><stop stopColor="#e9f7ff" /><stop offset="1" stopColor="#64b7e8" /></linearGradient></defs>
          <circle cx="16" cy="17" r="14" fill="url(#bowl)" stroke="#5895c0" /><ellipse cx="16" cy="19" rx="11" ry="2.500" stroke="#29516f" strokeWidth="1.500" /><path d="M25 0l-8 18" stroke="#d65234" strokeWidth="2" />
        </Ico>
      </div>
      <div className="ml-[2px] flex h-[38px] w-[48px] shrink-0 items-center justify-center border-2 border-t-[#404040] border-l-[#404040] border-r-white border-b-white bg-[#fcfcfc]">
        <Ico w={26} h={30}>
          <path d="M4 2h18q2 0 2 2v15q0 2-2 2h-5l-2 6v-6H4q-2 0-2-2V4q0-2 2-2z" fill="#fff" stroke="#cb2b22" strokeWidth="2.800" />
          <path d="M8 17V7.500L13 13l5-5.500V17" stroke="#cb2b22" strokeWidth="3.200" />
        </Ico>
      </div>
      <div className={`ml-[2px] ${BTN}`}><Sphere /></div>
      <div className={`ml-[2px] ${BTN}`}>
        <svg width="25" height="30" viewBox="0 0 28 32" fill="none" className="block shrink-0 overflow-visible">
          <g stroke="#f6faee" strokeWidth="3.500"><path d="M6 12h16v13H6zM6 11q0-8 8-8t8 8zM2.500 12v9M25.500 12v9M10 25v5M18 25v5" /></g>
          <path d="M6 12h16v11q0 2-2 2H8q-2 0-2-2zM6 11q0-7 8-7t8 7z" fill="#92c01f" />
          <path d="M2.800 13.500v6M25.200 13.500v6M10.500 25v4M17.500 25v4" stroke="#92c01f" strokeWidth="3.200" strokeLinecap="round" />
          <path d="M8.500 1.500l2 3M19.500 1.500l-2 3" stroke="#92c01f" strokeWidth="1.200" /><path d="M10 8h1.500M16.500 8H18" stroke="#fff" strokeWidth="1.500" />
        </svg>
      </div>
      <div className="ml-[245px] w-[18px] shrink-0 font-['DejaVu_Sans_Mono',monospace] text-[10.500px] text-black">CH</div>
      <div className="h-[26px] w-px shrink-0 bg-[#808080] shadow-[1px_0_0_#fff]" />
      <SogouS className="ml-[7px]" />
      <div className="ml-[4px] h-[26px] w-px shrink-0 bg-[#808080] shadow-[1px_0_0_#fff]" />
      <div className="ml-[2px] flex h-[38px] w-[221px] shrink-0 items-center border border-t-[#808080] border-l-[#808080] border-r-white border-b-white">
        <Ico w={6} h={9} className="ml-[5px]"><path d="M.5 4L3 1.500 5.500 4M.5 8L3 5.500 5.500 8" stroke="#000" strokeWidth="1.400" /></Ico>
        <Ico w={16} h={13} className="ml-[10px]"><rect y="1" width="14" height="12" fill="#20e820" /><path d="M1 3l3 9 3-10 3 10 3-9" stroke="#1424d8" strokeWidth="1.600" /><circle cx="8" cy="8" r="2" fill="#d22" /><path d="M0 1h5M12 12h3V4" stroke="#111" /></Ico>
        <Ico w={16} h={16} className="ml-[8px]"><path d="M2 1v14M3 2h4l2 1h4v6H9L7 8H3z" fill="#fff" stroke="#555" /><circle cx="10.500" cy="11" r="4.500" fill="#d22c30" /><path d="M8.700 9.200l3.600 3.600M12.300 9.200l-3.600 3.600" stroke="#fff" strokeWidth="1.400" /></Ico>
        <Ico w={15} h={16} className="ml-[8px]"><path d="M2 2h8v12H2zM4 0v2M8 0v2" fill="#fff" stroke="#555" /><path d="M6 5h8v3q0 2-3 2v4H9v-4q-3 0-3-2zM8 2.500V5M12 2.500V5" fill="#fff" stroke="#555" /></Ico>
        <Ico w={16} h={13} className="ml-[9px]"><path d="M.5 10h2v2.500h-2zM3.500 8.500h2v4h-2zM6.500 6.500h2v6h-2zM9.500 4h2v8.500h-2zM12.500 1h3v11.500h-3z" fill="#fff" stroke="#777" strokeWidth=".9" /></Ico>
        <Ico w={16} h={14} className="ml-[9px]"><path d="M1 5h3l4-4v12L4 9H1z" fill="#fff" stroke="#555" /><path d="M10 4q2 3 0 6M12.500 2.500q3 4.500 0 9" stroke="#666" /></Ico>
        <div className="mt-[2px] ml-[10px] flex w-[57px] shrink-0 flex-col items-center font-['DejaVu_Sans_Mono',monospace] text-[10px] leading-[16px] text-black"><span>20:33</span><span>2011/10/9</span></div>
        <Ico w={16} h={13} className="ml-[3px]"><path d="M0 1h14v8H0z" fill="#2d69b2" /><path d="M0 1h14L0 6z" fill="#80abd8" /><path d="M0 10h15v2H0z" fill="#233950" /></Ico>
      </div>
    </div>
  );
}

export default function App() {
  return (
    <div className="flex h-[768px] w-[1024px] flex-col overflow-hidden bg-[#b9cde8]">
      <div className="flex shrink-0 flex-col bg-linear-to-b from-[#c2d4ec] to-[#b4c8e4]">
        <TitleBar />
        <Ribbon />
      </div>
      <div className="flex h-[628px] shrink-0 border-t border-[#8297b5]">
        <div className="mt-px w-[4px] shrink-0 border-l-2 border-l-[#98adc8] bg-white" />
        <div className="flex flex-col pt-px">
          <MapPane />
        </div>
        <div className="w-[6px] shrink-0 border-r border-r-white bg-[#bfd2ea]" />
        <NotesPane />
        <div className="w-[3px] shrink-0 bg-[#dfe9f5]" />
        <SideTabs />
      </div>
      <DocTabs />
      <StatusBar />
      <div className="relative flex flex-col">
        <Taskbar />
        <svg className="absolute left-[563px] top-[-578px]" width="12" height="21" viewBox="0 0 12 21">
          <path d="M.5.500v16l3.700-3.500 2.800 6.500 2.200-1-2.700-6.200h5z" fill="#fff" stroke="#000" />
        </svg>
      </div>
    </div>
  );
}
